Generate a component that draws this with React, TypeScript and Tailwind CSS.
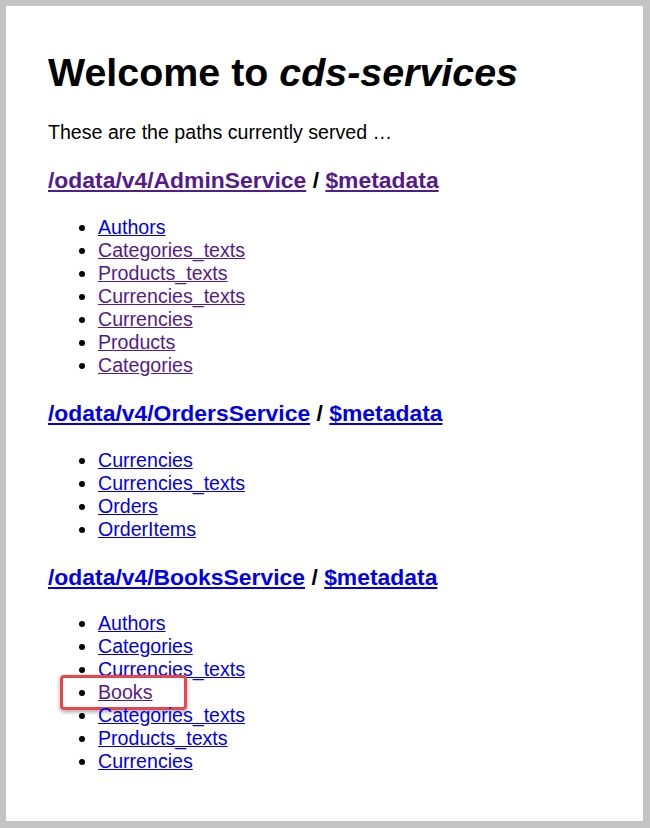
import React from "react";

const VISITED = "text-[#551a8b]";
const LINK = "text-[#0000ee]";

type Item = { label: string; visited?: boolean; boxed?: boolean };

function Service({
  path,
  visited,
  items,
}: {
  path: string;
  visited?: boolean;
  items: Item[];
}) {
  return (
    <>
      <h3 className="text-[22.9px] leading-[27px] font-bold mt-[23.4px] mb-[21.4px]">
        <a href="#" className={`underline ${visited ? VISITED : LINK}`}>
          {path}
        </a>{" "}
        /{" "}
        <a href="#" className={`underline ${visited ? VISITED : LINK}`}>
          $metadata
        </a>
      </h3>
      <ul className="list-disc pl-[50px] my-[20px] text-[19.6px] leading-[23px]">
        {items.map((it) => (
          <li key={it.label} className="relative">
            <a href="#" className={`underline ${it.visited ? VISITED : LINK}`}>
              {it.label}
            </a>
            {it.boxed && (
              <span className="absolute left-[-38px] top-[-6px] w-[127px] h-[35px] border-[3px] border-[#ea4548] rounded-[4px] shadow-[0_2px_4px_rgba(0,0,0,0.35)] pointer-events-none" />
            )}
          </li>
        ))}
      </ul>
    </>
  );
}

export default function App() {
  return (
    <div className="w-[650px] h-[828px] bg-[#c3c3c3] pt-[6px] pl-[6px] pr-[7px] pb-[7px] overflow-hidden">
      <div
        className="bg-white w-full h-full pl-[42px] pt-[44px] text-black overflow-hidden"
        style={{ fontFamily: '"Liberation Sans", Arial, sans-serif' }}
      >
        <h1 className="text-[39.4px] leading-[45px] font-bold mb-[26px]">
          Welcome to <i>cds-services</i>
        </h1>
        <p className="text-[19.6px] leading-[23px]">These are the paths currently served …</p>
        <Service
          path="/odata/v4/AdminService"
          visited
          items={[
            { label: "Authors" },
            { label: "Categories_texts", visited: true },
            { label: "Products_texts", visited: true },
            { label: "Currencies_texts", visited: true },
            { label: "Currencies", visited: true },
            { label: "Products", visited: true },
            { label: "Categories", visited: true },
          ]}
        />
        <Service
          path="/odata/v4/OrdersService"
          items={[
            { label: "Currencies" },
            { label: "Currencies_texts" },
            { label: "Orders" },
            { label: "OrderItems" },
          ]}
        />
        <Service
          path="/odata/v4/BooksService"
          items={[
            { label: "Authors" },
            { label: "Categories" },
            { label: "Currencies_texts" },
            { label: "Books", visited: true, boxed: true },
            { label: "Categories_texts" },
            { label: "Products_texts" },
            { label: "Currencies" },
          ]}
        />
      </div>
    </div>
  );
}
